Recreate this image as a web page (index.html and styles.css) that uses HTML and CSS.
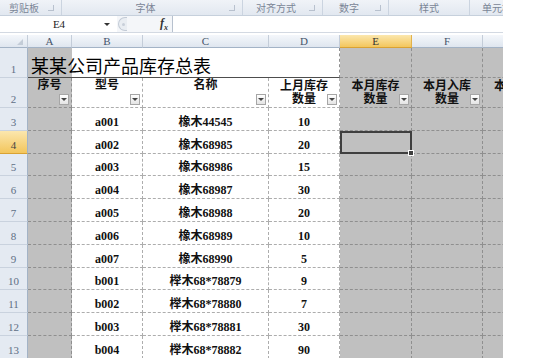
FILE: index.html
```html
<!DOCTYPE html>
<html lang="zh-CN">
<head>
    <meta charset="UTF-8">
    <title>某某公司产品库存总表</title>
    <link rel="stylesheet" href="styles.css">
</head>
<body>
    <div class="app">
        <div class="ribbon">
            <div class="grp w1"><span class="lbl">剪贴板</span><span class="launch"></span></div>
            <div class="grp w2"><span class="lbl">字体</span><span class="launch"></span></div>
            <div class="grp w3"><span class="lbl">对齐方式</span><span class="launch"></span></div>
            <div class="grp w4"><span class="lbl">数字</span><span class="launch"></span></div>
            <div class="grp w5"><span class="lbl">样式</span></div>
            <div class="grp w6"><span class="lbl">单元格</span></div>
        </div>

        <div class="fbar">
            <div class="namebox"><span class="ref">E4</span><span class="dd"></span></div>
            <div class="mid"><span class="grip"><span class="dot"></span></span><span class="fx"><i>f</i><sub>x</sub></span></div>
            <div class="finput"></div>
        </div>

        <div class="sheet">
            <!-- column headers -->
            <div class="ch corner"><span class="tri"></span></div>
            <div class="ch">A</div>
            <div class="ch">B</div>
            <div class="ch">C</div>
            <div class="ch">D</div>
            <div class="ch sel">E</div>
            <div class="ch">F</div>
            <div class="ch">G</div>

            <!-- row 1 -->
            <div class="rh">1</div>
            <div class="c g t1 title-cell"><span class="title">某某公司产品库存总表</span></div>
            <div class="c t1"></div>
            <div class="c t1"></div>
            <div class="c t1 last"></div>
            <div class="c g t1g"></div>
            <div class="c g t1g"></div>
            <div class="c g t1g"></div>

            <!-- row 2 -->
            <div class="rh">2</div>
            <div class="c g hd"><span class="ht">序号</span><span class="fb"></span></div>
            <div class="c hd"><span class="ht">型号</span><span class="fb"></span></div>
            <div class="c hd"><span class="ht">名称</span><span class="fb"></span></div>
            <div class="c hd"><span class="ht two">上月库存<br>数量</span><span class="fb"></span></div>
            <div class="c g hd"><span class="ht two">本月库存<br>数量</span><span class="fb"></span></div>
            <div class="c g hd"><span class="ht two">本月入库<br>数量</span><span class="fb"></span></div>
            <div class="c g hd"><span class="ht two">本月出库<br>数量</span><span class="fb"></span></div>

            <div class="rh">3</div><div class="c g"></div><div class="c">a001</div><div class="c">橡木44545</div><div class="c">10</div><div class="c g"></div><div class="c g"></div><div class="c g"></div>
            <div class="rh sel">4</div><div class="c g"></div><div class="c">a002</div><div class="c">橡木68985</div><div class="c">20</div><div class="c g act"></div><div class="c g"></div><div class="c g"></div>
            <div class="rh">5</div><div class="c g"></div><div class="c">a003</div><div class="c">橡木68986</div><div class="c">15</div><div class="c g"></div><div class="c g"></div><div class="c g"></div>
            <div class="rh">6</div><div class="c g"></div><div class="c">a004</div><div class="c">橡木68987</div><div class="c">30</div><div class="c g"></div><div class="c g"></div><div class="c g"></div>
            <div class="rh">7</div><div class="c g"></div><div class="c">a005</div><div class="c">橡木68988</div><div class="c">20</div><div class="c g"></div><div class="c g"></div><div class="c g"></div>
            <div class="rh">8</div><div class="c g"></div><div class="c">a006</div><div class="c">橡木68989</div><div class="c">10</div><div class="c g"></div><div class="c g"></div><div class="c g"></div>
            <div class="rh">9</div><div class="c g"></div><div class="c">a007</div><div class="c">橡木68990</div><div class="c">5</div><div class="c g"></div><div class="c g"></div><div class="c g"></div>
            <div class="rh">10</div><div class="c g"></div><div class="c">b001</div><div class="c">榉木68*78879</div><div class="c">9</div><div class="c g"></div><div class="c g"></div><div class="c g"></div>
            <div class="rh">11</div><div class="c g"></div><div class="c">b002</div><div class="c">榉木68*78880</div><div class="c">7</div><div class="c g"></div><div class="c g"></div><div class="c g"></div>
            <div class="rh">12</div><div class="c g"></div><div class="c">b003</div><div class="c">榉木68*78881</div><div class="c">30</div><div class="c g"></div><div class="c g"></div><div class="c g"></div>
            <div class="rh">13</div><div class="c g"></div><div class="c">b004</div><div class="c">榉木68*78882</div><div class="c">90</div><div class="c g"></div><div class="c g"></div><div class="c g"></div>
        </div>
    </div>
</body>
</html>
```

FILE: styles.css
```css
body {
    margin: 0;
    background: #fff;
    font-family: "Noto Sans CJK SC", sans-serif;
}
.app {
    width: 503px;
    overflow: hidden;
}

/* ribbon group labels */
.ribbon {
    display: flex;
    height: 16px;
    box-sizing: border-box;
    background: linear-gradient(#f0f3f8, #e2e8f0);
    border-bottom: 1px solid #c6d0dc;
}
.grp {
    flex: none;
    display: flex;
    align-items: center;
    box-sizing: border-box;
    border-right: 1px solid #cbd4e0;
    font-size: 10px;
    color: #7a8596;
    line-height: 15px;
}
.grp .lbl {
    flex: 1;
    text-align: center;
    white-space: nowrap;
}
.launch {
    width: 5px;
    height: 5px;
    border: 1px solid #b8c1ce;
    border-width: 0 1px 1px 0;
    margin-right: 7px;
}
.w1 { width: 62px; }
.w2 { width: 181px; }
.w3 { width: 80px; }
.w4 { width: 66px; }
.w5 { width: 81px; }
.w6 { width: 40px; border-right: none; }
.w6 .lbl { text-align: left; padding-left: 12px; }

/* formula bar */
.fbar {
    display: flex;
    height: 17px;
    box-sizing: border-box;
    border-bottom: 1px solid #d3d9e2;
}
.namebox {
    width: 117px;
    display: flex;
    align-items: center;
    background: #fff;
    font: 11px "Liberation Serif", serif;
    color: #222;
}
.namebox .ref {
    flex: 1;
    text-align: center;
    padding-left: 14px;
}
.namebox .dd {
    width: 0;
    height: 0;
    border-left: 3px solid transparent;
    border-right: 3px solid transparent;
    border-top: 3px solid #333;
    margin-right: 7px;
}
.mid {
    width: 55px;
    display: flex;
    align-items: center;
    background: #f4f6f9;
}
.grip {
    width: 8px;
    height: 12px;
    margin-left: 1px;
    border: 1px solid #c3cbd6;
    border-right: none;
    border-radius: 7px 0 0 7px;
    background: #e9edf2;
    display: flex;
    align-items: center;
    justify-content: center;
}
.grip .dot {
    width: 3px;
    height: 3px;
    border-radius: 50%;
    background: #c8cfd9;
}
.fx {
    margin-left: 33px;
    font: bold 12px "Liberation Serif", serif;
    color: #333;
}
.fx sub {
    font-size: 8px;
    font-style: italic;
}
.finput {
    flex: 1;
    background: #fff;
    border-left: 1px solid #b7c1ce;
}

/* sheet grid */
.sheet {
    display: grid;
    grid-template-columns: 28px 44px 71px 126px 71px 72px 71px 71px;
    grid-template-rows: 13px 30px 30px 23px 23px 22px 23px 23px 23px 23px 22px 23px 23px 23px;
    margin-top: 2px;
}
.ch {
    box-sizing: border-box;
    background: linear-gradient(#f4f7fb, #dfe6ef);
    border-right: 1px solid #c4cdd9;
    border-bottom: 1px solid #a3b3c6;
    font: 11px "Liberation Serif", serif;
    color: #45546a;
    text-align: center;
    line-height: 12px;
}
.ch.sel {
    background: linear-gradient(#fbe7ae, #f3c65c);
    border-right-color: #e2b24c;
    border-bottom-color: #d9a233;
    color: #333;
}
.corner {
    display: flex;
    align-items: flex-end;
    justify-content: flex-end;
}
.tri {
    width: 0;
    height: 0;
    border-left: 6px solid transparent;
    border-bottom: 6px solid #c3ccd7;
    margin: 0 4px 2px 0;
}
.rh {
    box-sizing: border-box;
    background: #e4eaf2;
    border-right: 1px solid #a3b3c6;
    border-bottom: 1px solid #c9d2de;
    font: 11px "Liberation Serif", serif;
    line-height: 11px;
    color: #5f6f85;
    display: flex;
    align-items: flex-end;
    justify-content: center;
    padding-bottom: 2px;
}
.rh.sel {
    background: linear-gradient(#fbe7ae, #f3c65c);
    border-bottom-color: #d9a233;
    color: #444;
}

.c {
    box-sizing: border-box;
    border-right: 1px dashed #adadad;
    border-bottom: 1px dashed #adadad;
    display: flex;
    align-items: flex-end;
    justify-content: center;
    padding-bottom: 1px;
    font: bold 12px "Liberation Serif", "Noto Sans CJK SC", serif;
    line-height: 13px;
    color: #111;
    white-space: nowrap;
}
.g {
    background: #c0c0c0;
    border-color: #8f8f8f;
}
.t1 {
    border-right: none;
    border-bottom: 1px solid #4d4d4d;
}
.t1.g {
    border-right: none;
}
.t1.last {
    border-right: 1px dashed #8f8f8f;
}
.t1g {
    border-bottom: 1px dashed #8f8f8f;
}
.title-cell {
    justify-content: flex-start;
    padding: 0 0 0 3px;
    overflow: visible;
}
.title {
    font: 18px "Noto Sans CJK SC", sans-serif;
    line-height: 18px;
    margin-bottom: 3px;
    color: #000;
}

/* header row with filter buttons */
.hd {
    display: grid;
    grid-template-columns: 1fr;
    grid-template-rows: 1fr;
    justify-content: stretch;
    align-items: stretch;
    padding: 0;
}
.hd .ht {
    grid-area: 1 / 1;
    justify-self: center;
    align-self: start;
    margin-top: 0;
    line-height: 14px;
    text-align: center;
}
.hd .ht.two {
    margin-top: 2px;
    line-height: 13px;
}
.fb {
    grid-area: 1 / 1;
    justify-self: end;
    align-self: end;
    width: 10px;
    height: 11px;
    margin: 0 2px 2px 0;
    box-sizing: border-box;
    border: 1px solid #a6a6a6;
    background: linear-gradient(#fff, #e4e4e4);
    display: flex;
    align-items: center;
    justify-content: center;
}
.fb::before {
    content: "";
    border-left: 3px solid transparent;
    border-right: 3px solid transparent;
    border-top: 3px solid #444;
}

/* active cell */
.act {
    position: relative;
    outline: 2px solid #3f3f3f;
    outline-offset: -2px;
}
.act::after {
    content: "";
    position: absolute;
    right: -3px;
    bottom: -3px;
    width: 4px;
    height: 4px;
    background: #3f3f3f;
    border: 1px solid #fff;
}
```
